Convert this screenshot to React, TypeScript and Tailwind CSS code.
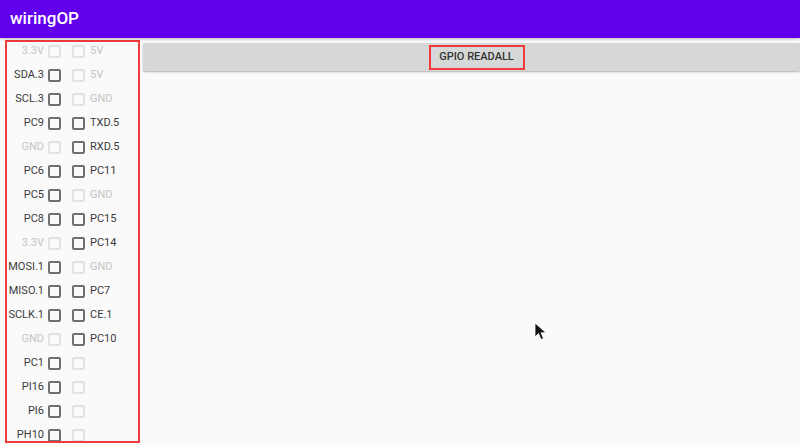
import React from 'react'

type Pin = { label: string; on: boolean }

const rows: [Pin, Pin][] = [
  [{ label: '3.3V', on: false }, { label: '5V', on: false }],
  [{ label: 'SDA.3', on: true }, { label: '5V', on: false }],
  [{ label: 'SCL.3', on: true }, { label: 'GND', on: false }],
  [{ label: 'PC9', on: true }, { label: 'TXD.5', on: true }],
  [{ label: 'GND', on: false }, { label: 'RXD.5', on: true }],
  [{ label: 'PC6', on: true }, { label: 'PC11', on: true }],
  [{ label: 'PC5', on: true }, { label: 'GND', on: false }],
  [{ label: 'PC8', on: true }, { label: 'PC15', on: true }],
  [{ label: '3.3V', on: false }, { label: 'PC14', on: true }],
  [{ label: 'MOSI.1', on: true }, { label: 'GND', on: false }],
  [{ label: 'MISO.1', on: true }, { label: 'PC7', on: true }],
  [{ label: 'SCLK.1', on: true }, { label: 'CE.1', on: true }],
  [{ label: 'GND', on: false }, { label: 'PC10', on: true }],
  [{ label: 'PC1', on: true }, { label: '', on: false }],
  [{ label: 'PI16', on: true }, { label: '', on: false }],
  [{ label: 'PI6', on: true }, { label: '', on: false }],
  [{ label: 'PH10', on: true }, { label: '', on: false }],
]

function Box({ on }: { on: boolean }) {
  return (
    <div
      className={
        on
          ? 'w-[13px] h-[13px] rounded-[2px] border-2 border-[#707070]'
          : 'w-[13px] h-[13px] rounded-[2px] border-2 border-[#e2e2e2]'
      }
    />
  )
}

export default function App() {
  return (
    <div className="relative w-[800px] h-[445px] overflow-hidden bg-[#fafafa] font-['Roboto',sans-serif]">
      <div className="h-[38px] bg-[#6200ee] flex items-center pl-[10px] shadow-[0_1px_3px_rgba(0,0,0,0.25)] relative z-10">
        <span className="text-white text-[17px] font-medium">wiringOP</span>
      </div>

      <div className="flex">
        <div className="ml-[5px] mt-[2px] w-[135px] h-[403px] border-2 border-[#f23c3c] overflow-hidden">
          <div className="-mt-[3px] flex flex-col">
            {rows.map(([l, r], i) => (
              <div key={i} className="h-[24px] flex items-center text-[11px]">
                <span
                  className={
                    'w-[37px] text-right ' + (l.on ? 'text-[#3a3a3a]' : 'text-[#c4c4c4]')
                  }
                >
                  {l.label}
                </span>
                <div className="ml-[4px]">
                  <Box on={l.on} />
                </div>
                <div className="ml-[11px]">
                  <Box on={r.on} />
                </div>
                <span className={'ml-[5px] ' + (r.on ? 'text-[#3a3a3a]' : 'text-[#c4c4c4]')}>
                  {r.label}
                </span>
              </div>
            ))}
          </div>
        </div>

        <div className="flex-1 ml-[3px] mt-[5px]">
          <div className="h-[28px] bg-[#d6d7d7] shadow-[0_1px_2px_rgba(0,0,0,0.3)] rounded-[2px] flex items-center justify-center pl-[10px]">
            <div className="border-2 border-[#f23c3c] h-[25px] w-[96px] flex items-center justify-center">
              <span className="text-[11px] font-medium text-[#333]">GPIO READALL</span>
            </div>
          </div>
        </div>
      </div>

      <svg className="absolute left-[534px] top-[322px]" width="14" height="20" viewBox="0 0 14 20">
        <path d="M1 1 L1 15 L4.5 11.5 L7 17.5 L9.5 16.5 L7 10.8 L12 10.8 Z" fill="#111" stroke="#fff" strokeWidth="0.8" />
      </svg>
    </div>
  )
}
